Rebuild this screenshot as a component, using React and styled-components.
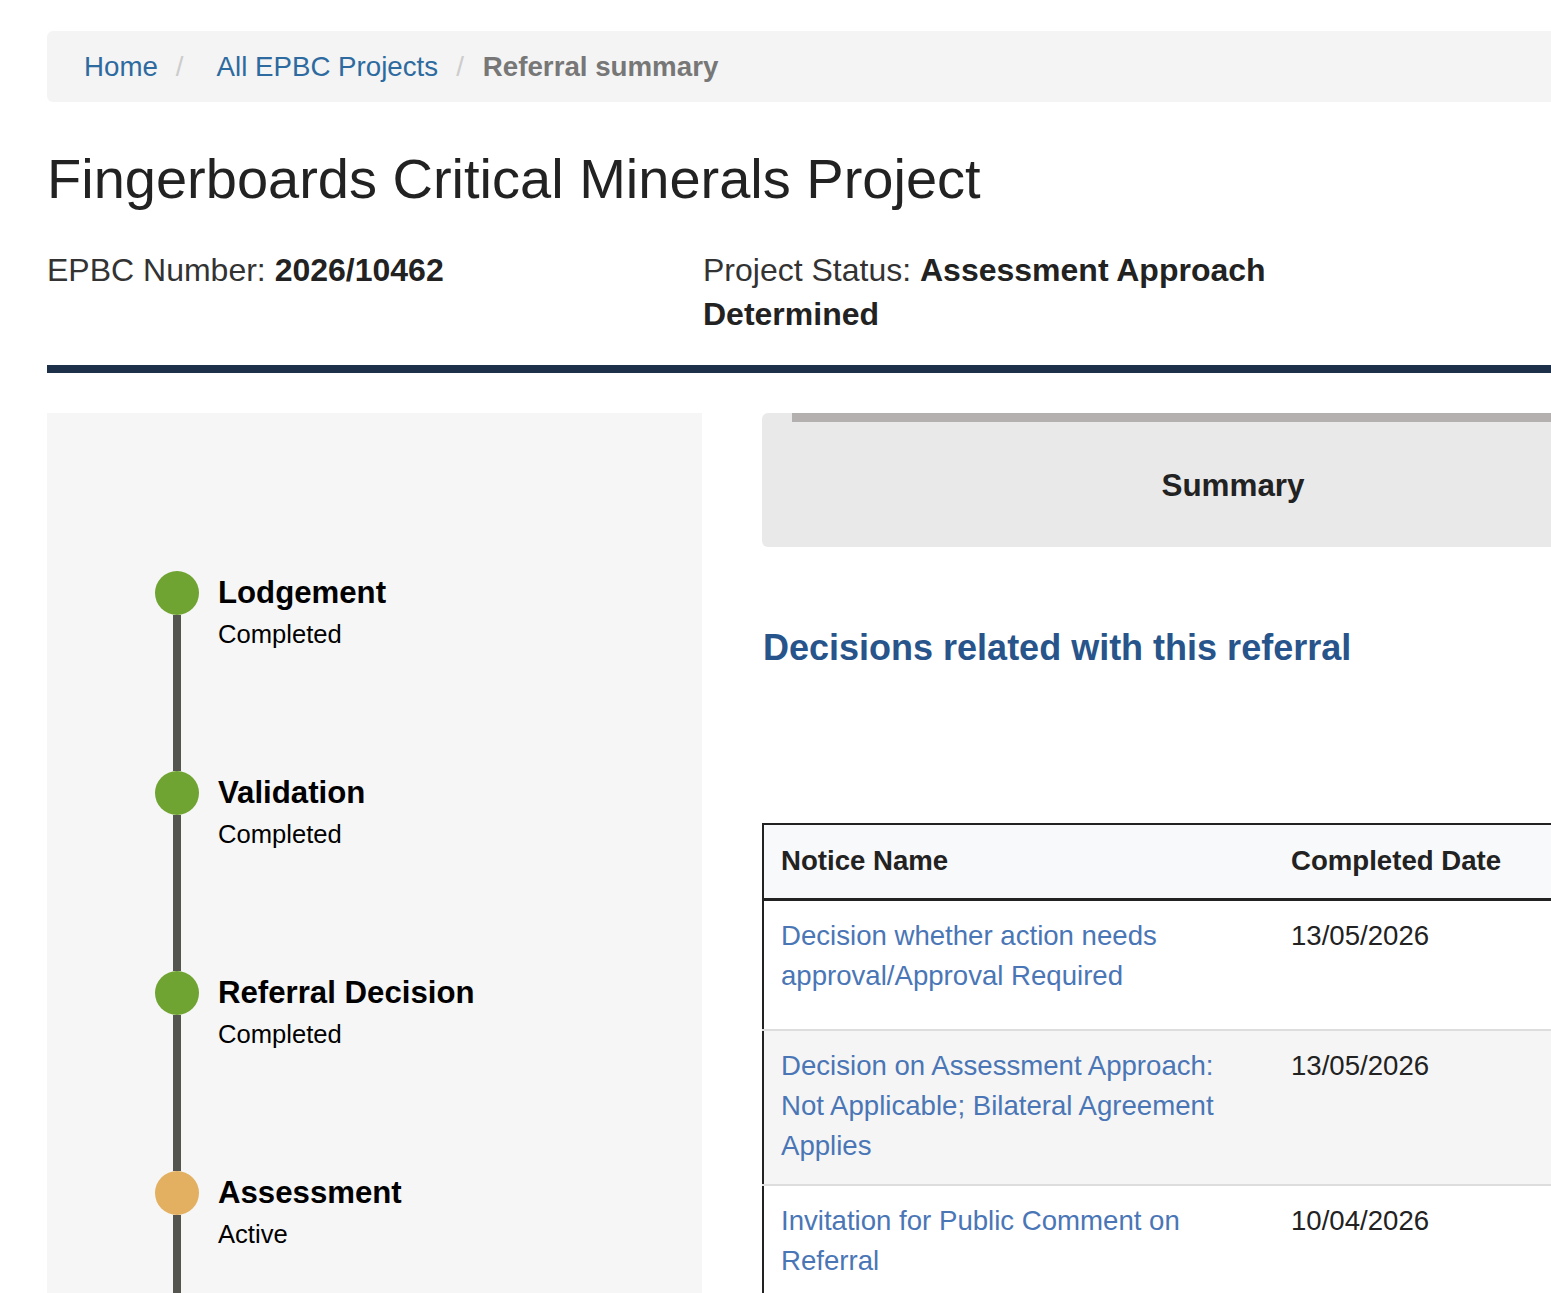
import React from "react";
import styled, { createGlobalStyle } from "styled-components";

const Global = createGlobalStyle`
  html, body { margin: 0; padding: 0; overflow: hidden; background: #fff; }
  body { font-family: "Liberation Sans", Arial, sans-serif; color: #333; }
  * { box-sizing: border-box; }
`;

const Page = styled.div`
  width: 1704px;
  padding: 31px 0 0 47px;
`;

const Breadcrumb = styled.nav`
  display: flex;
  align-items: center;
  height: 71px;
  padding: 0 0 0 37px;
  background: #f4f4f4;
  border-radius: 6px;
  font-size: 27.7px;
`;

const Crumb = styled.a`
  color: ${(p) => (p.$active ? "#777" : "#2d6a9f")};
  font-weight: ${(p) => (p.$active ? 700 : 400)};
  text-decoration: none;
  margin-left: ${(p) => p.$offset || 0}px;
`;

const Sep = styled.span`
  color: #ccc;
  margin: 0 19px 0 18px;
`;

const Title = styled.h1`
  margin: 46px 0 0;
  font-size: 56px;
  line-height: 62px;
  font-weight: 400;
  color: #222;
`;

const MetaRow = styled.div`
  display: grid;
  grid-template-columns: 656px 656px;
  margin-top: 38px;
  font-size: 32px;
  line-height: 44px;
  color: #333;
  b { color: #222; font-weight: 700; }
`;

const Rule = styled.hr`
  margin: 29px 0 0;
  border: 0;
  height: 8px;
  background: #1c3049;
`;

const Columns = styled.div`
  display: grid;
  grid-template-columns: 655px 942px;
  column-gap: 60px;
  margin-top: 40px;
`;

const SidePanel = styled.aside`
  background: #f6f6f6;
  padding: 158px 0 0 108px;
  height: 1000px;
`;

const Step = styled.div`
  display: flex;
  height: 200px;
`;

const Marker = styled.div`
  display: flex;
  flex-direction: column;
  align-items: center;
  width: 44px;
  flex: none;
`;

const Dot = styled.span`
  width: 44px;
  height: 44px;
  border-radius: 50%;
  background: ${(p) => (p.$active ? "#e2b060" : "#6fa332")};
  flex: none;
`;

const Stem = styled.span`
  width: 8px;
  flex: 1;
  background: #55554f;
`;

const StepText = styled.div`
  padding: 3px 0 0 19px;
  color: #000;
`;

const StepTitle = styled.div`
  font-size: 31.2px;
  line-height: 38px;
  font-weight: 700;
`;

const StepSub = styled.div`
  margin-top: 2px;
  font-size: 25.6px;
  line-height: 40px;
`;

const Main = styled.section``;

const TabBar = styled.div`
  display: flex;
  height: 134px;
  padding: 0 30px;
  background: #e9e9e9;
  border-radius: 6px;
`;

const Tab = styled.div`
  flex: 1;
  display: flex;
  align-items: center;
  justify-content: center;
  border-top: 9px solid #b4b0af;
  padding-top: 2px;
  font-size: 31.4px;
  line-height: 37px;
  font-weight: 700;
  color: #222;
`;

const SectionHeading = styled.h2`
  margin: 81px 0 0 1px;
  font-size: 36px;
  line-height: 40px;
  font-weight: 700;
  color: #27548a;
`;

const Table = styled.table`
  margin-top: 155px;
  width: 100%;
  border-collapse: collapse;
  border-top: 2px solid #222;
  border-left: 2px solid #222;
  font-size: 27.6px;
  line-height: 40px;
`;

const HeadCell = styled.th`
  text-align: left;
  padding: 16px 17px 17px;
  background: #f8f9fa;
  border-bottom: 3px solid #222;
  font-weight: 700;
  color: #222;
  width: ${(p) => p.$w || "auto"};
`;

const Row = styled.tr`
  background: ${(p) => (p.$striped ? "#f5f5f5" : "#fff")};
  border-bottom: 2px solid #ddd;
  height: ${(p) => (p.$min ? `${p.$min}px` : "auto")};
`;

const Cell = styled.td`
  vertical-align: top;
  padding: 15px 17px 18px;
  color: #222;
`;

const NoticeLink = styled.a`
  color: #4a76b6;
  text-decoration: none;
`;

const steps = [
  { title: "Lodgement", sub: "Completed" },
  { title: "Validation", sub: "Completed" },
  { title: "Referral Decision", sub: "Completed" },
  { title: "Assessment", sub: "Active", active: true },
];

const notices = [
  { name: "Decision whether action needs approval/Approval Required", date: "13/05/2026", min: 130 },
  { name: "Decision on Assessment Approach: Not Applicable; Bilateral Agreement Applies", date: "13/05/2026" },
  { name: "Invitation for Public Comment on Referral", date: "10/04/2026" },
];

export default function App() {
  return (
    <>
      <Global />
      <Page>
        <Breadcrumb>
          <Crumb href="#">Home</Crumb>
          <Sep>/</Sep>
          <Crumb href="#" $offset={14}>All EPBC Projects</Crumb>
          <Sep>/</Sep>
          <Crumb $active>Referral summary</Crumb>
        </Breadcrumb>

        <Title>Fingerboards Critical Minerals Project</Title>

        <MetaRow>
          <div>
            EPBC Number: <b>2026/10462</b>
          </div>
          <div>
            Project Status: <b>Assessment Approach Determined</b>
          </div>
        </MetaRow>

        <Rule />

        <Columns>
          <SidePanel>
            {steps.map((s) => (
              <Step key={s.title}>
                <Marker>
                  <Dot $active={s.active} />
                  <Stem />
                </Marker>
                <StepText>
                  <StepTitle>{s.title}</StepTitle>
                  <StepSub>{s.sub}</StepSub>
                </StepText>
              </Step>
            ))}
          </SidePanel>

          <Main>
            <TabBar>
              <Tab>Summary</Tab>
            </TabBar>

            <SectionHeading>Decisions related with this referral</SectionHeading>

            <Table>
              <thead>
                <tr>
                  <HeadCell $w="511px">Notice Name</HeadCell>
                  <HeadCell>Completed Date</HeadCell>
                </tr>
              </thead>
              <tbody>
                {notices.map((n, i) => (
                  <Row key={n.name} $striped={i % 2 === 1} $min={n.min}>
                    <Cell>
                      <NoticeLink href="#">{n.name}</NoticeLink>
                    </Cell>
                    <Cell>{n.date}</Cell>
                  </Row>
                ))}
              </tbody>
            </Table>
          </Main>
        </Columns>
      </Page>
    </>
  );
}
